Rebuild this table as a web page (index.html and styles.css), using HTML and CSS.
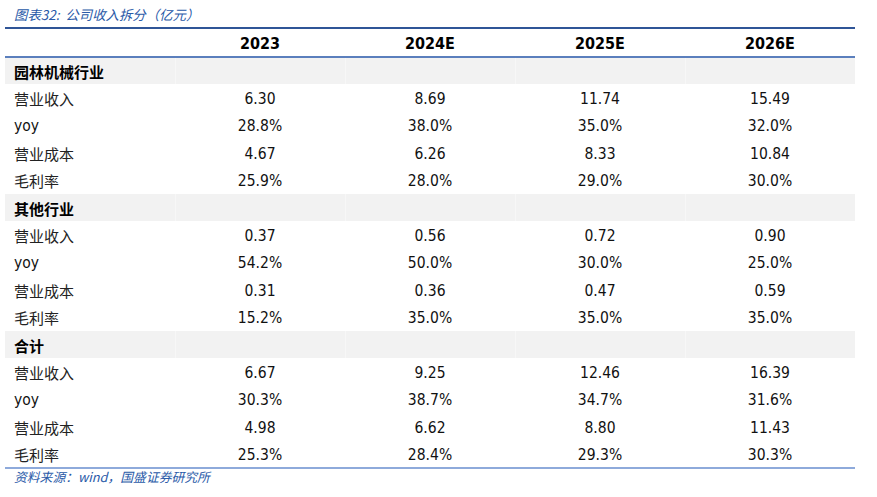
FILE: index.html
```html
<!DOCTYPE html>
<html lang="zh-CN">
<head>
<meta charset="utf-8">
<title>公司收入拆分</title>
<link rel="stylesheet" href="styles.css">
</head>
<body>
<div class="page">
  <div class="caption">图表32:&nbsp;&nbsp;公司收入拆分（亿元）</div>
  <table class="data">
    <colgroup>
      <col class="c"><col class="c"><col class="c"><col class="c"><col class="c">
    </colgroup>
    <thead>
      <tr><th class="label"></th><th>2023</th><th>2024E</th><th>2025E</th><th>2026E</th></tr>
    </thead>
    <tbody>
      <tr class="cat"><td class="label">园林机械行业</td><td></td><td></td><td></td><td></td></tr>
      <tr><td class="label">营业收入</td><td>6.30</td><td>8.69</td><td>11.74</td><td>15.49</td></tr>
      <tr><td class="label num">yoy</td><td>28.8%</td><td>38.0%</td><td>35.0%</td><td>32.0%</td></tr>
      <tr><td class="label">营业成本</td><td>4.67</td><td>6.26</td><td>8.33</td><td>10.84</td></tr>
      <tr><td class="label">毛利率</td><td>25.9%</td><td>28.0%</td><td>29.0%</td><td>30.0%</td></tr>
      <tr class="cat"><td class="label">其他行业</td><td></td><td></td><td></td><td></td></tr>
      <tr><td class="label">营业收入</td><td>0.37</td><td>0.56</td><td>0.72</td><td>0.90</td></tr>
      <tr><td class="label num">yoy</td><td>54.2%</td><td>50.0%</td><td>30.0%</td><td>25.0%</td></tr>
      <tr><td class="label">营业成本</td><td>0.31</td><td>0.36</td><td>0.47</td><td>0.59</td></tr>
      <tr><td class="label">毛利率</td><td>15.2%</td><td>35.0%</td><td>35.0%</td><td>35.0%</td></tr>
      <tr class="cat"><td class="label">合计</td><td></td><td></td><td></td><td></td></tr>
      <tr><td class="label">营业收入</td><td>6.67</td><td>9.25</td><td>12.46</td><td>16.39</td></tr>
      <tr><td class="label num">yoy</td><td>30.3%</td><td>38.7%</td><td>34.7%</td><td>31.6%</td></tr>
      <tr><td class="label">营业成本</td><td>4.98</td><td>6.62</td><td>8.80</td><td>11.43</td></tr>
      <tr><td class="label">毛利率</td><td>25.3%</td><td>28.4%</td><td>29.3%</td><td>30.3%</td></tr>
    </tbody>
  </table>
  <div class="source">资料来源：wind，国盛证券研究所</div>
</div>
</body>
</html>
```

FILE: styles.css
```css
html, body {
  margin: 0;
  padding: 0;
  background: #ffffff;
}

.page {
  width: 850px;
  padding-left: 5px;
}

.caption {
  height: 27px;
  line-height: 28px;
  padding-left: 9px;
  font-family: "Noto Sans CJK SC", "Noto Sans", sans-serif;
  font-size: 13.4px;
  font-style: italic;
  color: #2a5aa8;
  white-space: nowrap;
}

.data {
  width: 850px;
  border-collapse: collapse;
  table-layout: fixed;
  border-top: 2px solid #2f5597;
  border-bottom: 2px solid #8eaadb;
  font-family: "DejaVu Sans Condensed", "DejaVu Sans", sans-serif;
  font-stretch: condensed;
  font-size: 15.5px;
  color: #111111;
}

.data col.c {
  width: 170px;
}

.data th,
.data td {
  padding: 0;
  line-height: 20px;
  vertical-align: middle;
  text-align: center;
  white-space: nowrap;
}

.data thead th {
  height: 24px;
  padding-top: 3px;
  font-weight: bold;
  font-size: 16px;
  color: #000000;
  border-bottom: 2px solid #5b7fbd;
}

.data tbody tr {
  height: 27.4px;
}

.data td {
  padding-top: 2px;
}

.data .label {
  text-align: left;
  padding-left: 9px;
  font-family: "Noto Sans CJK SC", sans-serif;
  font-size: 15px;
  font-weight: normal;
  color: #222222;
}

.data .label.num {
  font-family: "DejaVu Sans Condensed", "DejaVu Sans", sans-serif;
  font-size: 15.5px;
  color: #111111;
}

.data tr.cat td {
  background: #f2f2f2;
  border-left: 1px solid #f7f7f7;
}

.data tr.cat td.label {
  font-weight: bold;
  color: #000000;
  border-left: none;
}

.source {
  height: 20px;
  line-height: 16px;
  padding-left: 9px;
  font-family: "Noto Sans CJK SC", "Noto Sans", sans-serif;
  font-size: 12.8px;
  font-style: italic;
  color: #2a5aa8;
  white-space: nowrap;
}
```
